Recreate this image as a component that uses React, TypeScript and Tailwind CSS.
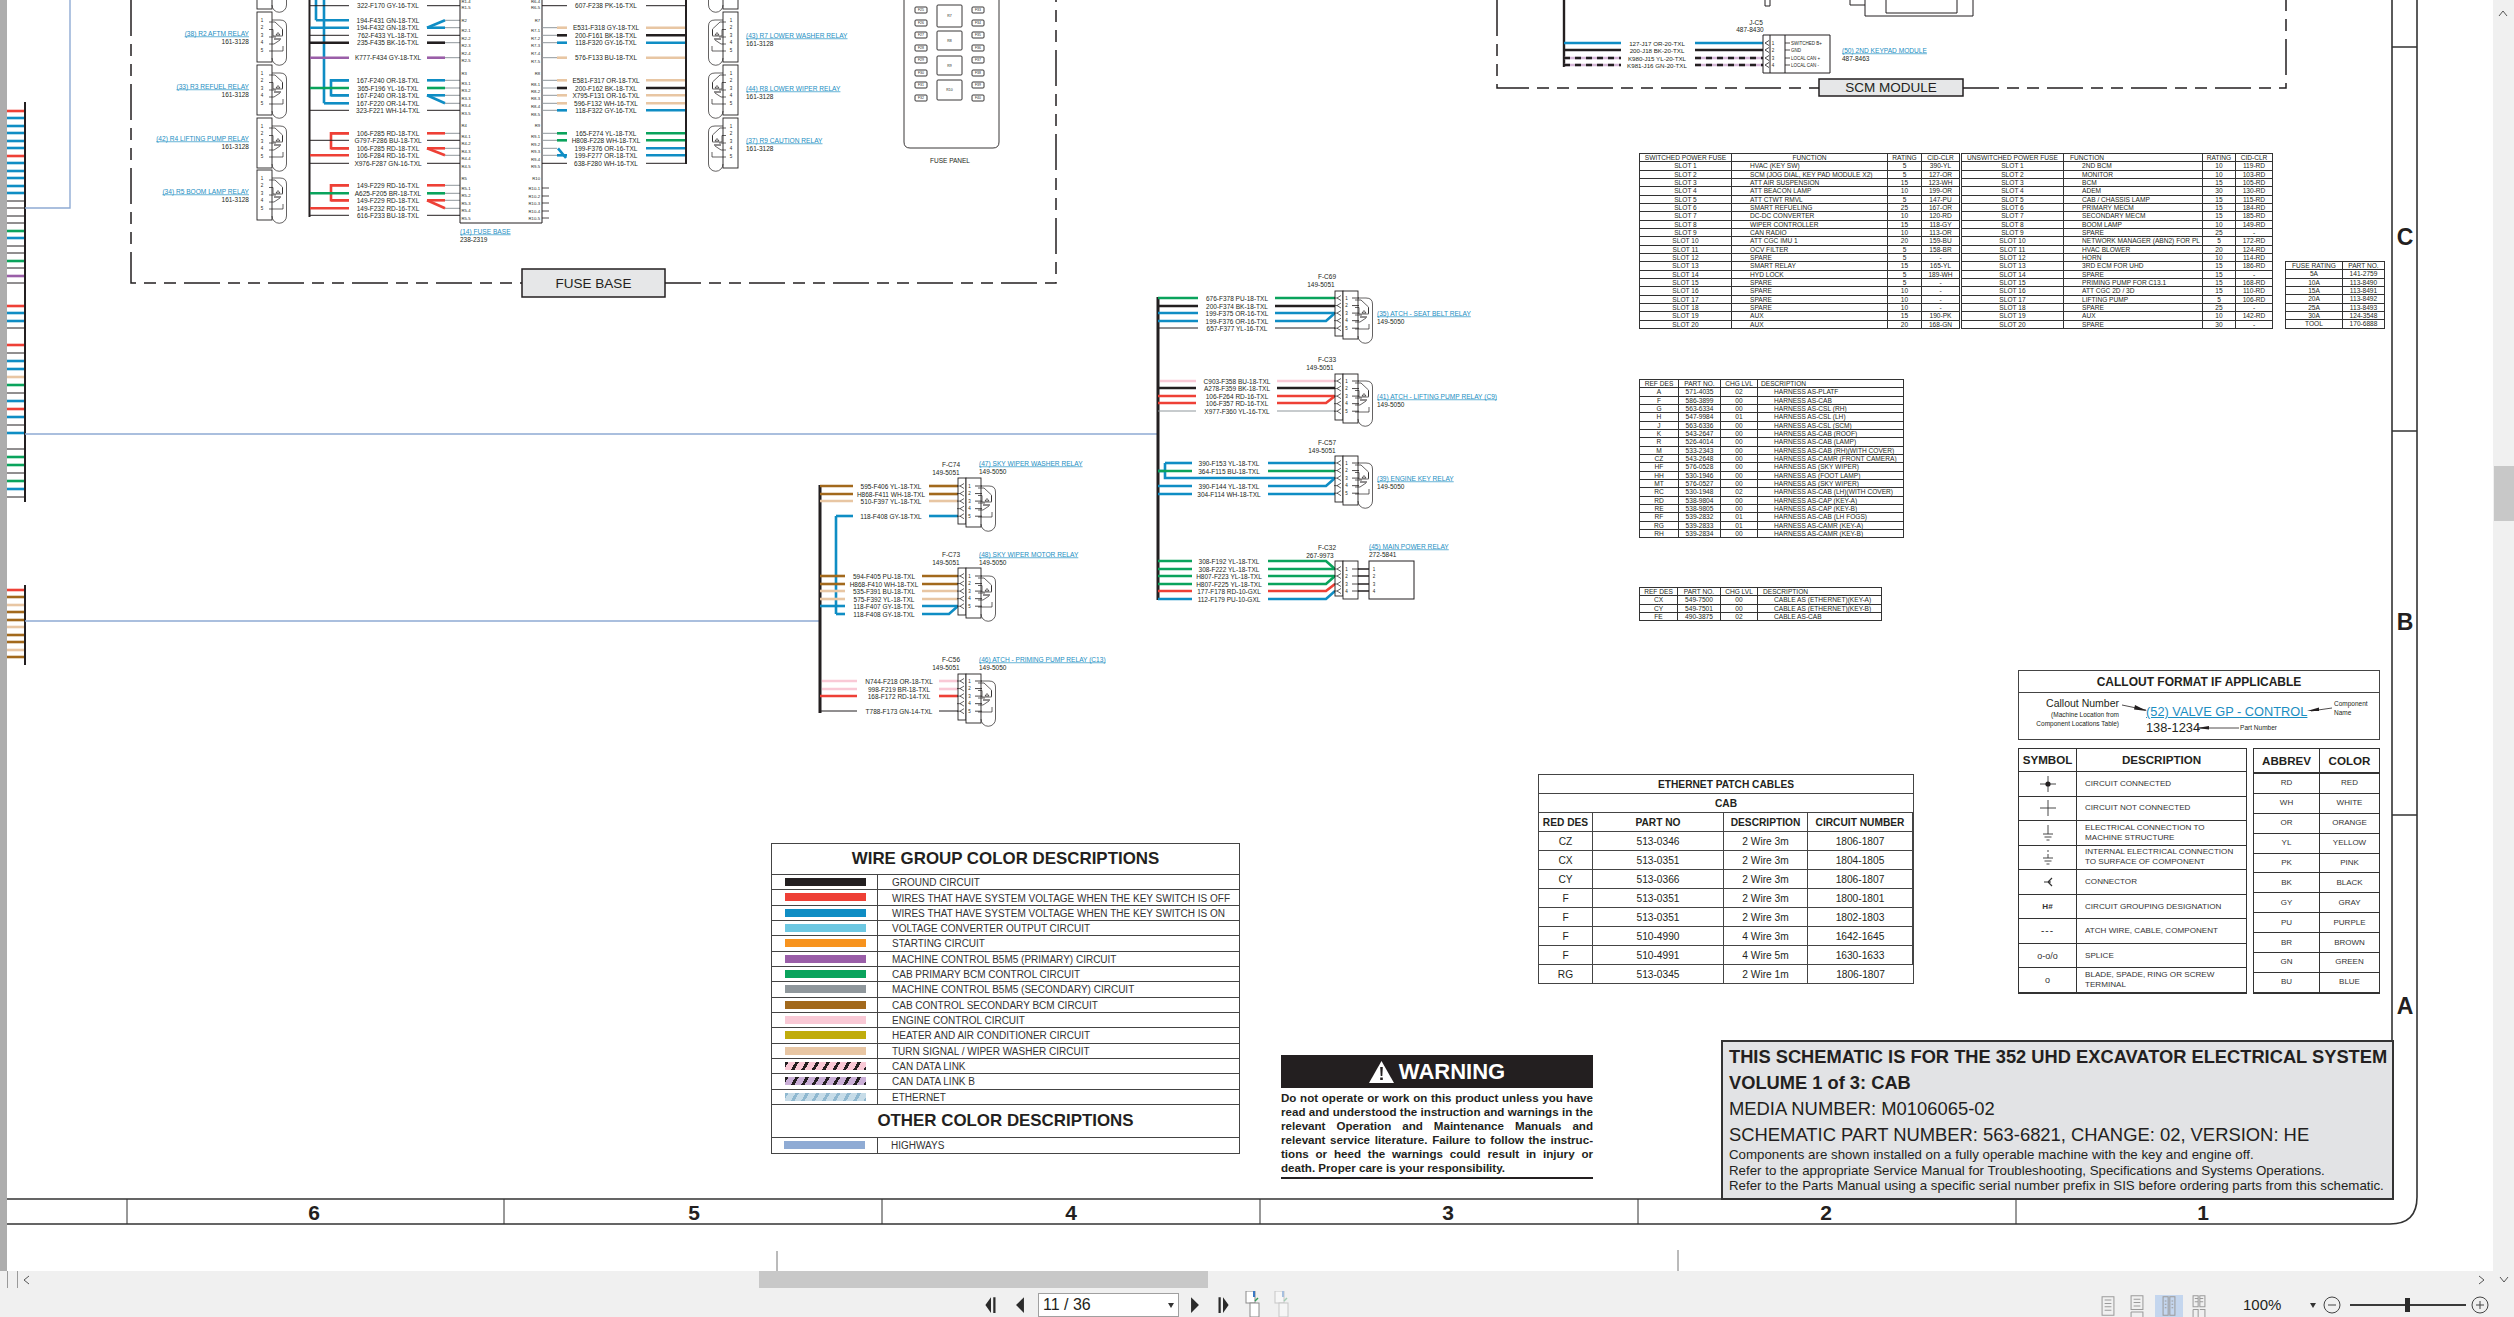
import type { ReactNode } from "react";

// ─── Wire colours ─────────────────────────────────────────────────────────────

const BLUE = "#0f8dc4";
const GREEN = "#0aa35c";
const RED = "#ee4036";
const BLACK = "#231f20";
const TAN = "#e8c6a3";
const PINK = "#f9c9d6";
const BROWN = "#a2691c";
const PURPLE = "#9a5ea8";
const GRAY = "#8f979c";
const HIGHWAY = "#8fabd4";

// ─── Schematic data ───────────────────────────────────────────────────────────

type Row = {
  y: number;
  label: string;
  color: string;
  thin?: boolean;
  from?: number;
  to?: number;
};

const FUSE_LEFT: Row[] = [
  { y: 5.7, label: "322-F170 GY-16-TXL", color: BLACK, thin: true },
  { y: 20.3, label: "194-F431 GN-18-TXL", color: BLUE, from: 316, to: 27.7 },
  { y: 27.7, label: "194-F432 GN-18-TXL", color: BLUE },
  { y: 35.3, label: "762-F433 YL-18-TXL", color: BLACK, thin: true },
  { y: 42.7, label: "235-F435 BK-16-TXL", color: BLACK },
  { y: 57.7, label: "K777-F434 GY-18-TXL", color: PURPLE },
  { y: 80.3, label: "167-F240 OR-18-TXL", color: BLUE, from: 331 },
  { y: 88, label: "365-F196 YL-16-TXL", color: GREEN },
  { y: 95.3, label: "167-F240 OR-18-TXL", color: BLUE, from: 331 },
  { y: 103.3, label: "167-F220 OR-14-TXL", color: BLUE, from: 324, to: 95.3 },
  { y: 110.3, label: "323-F221 WH-14-TXL", color: BLACK, thin: true },
  { y: 133.3, label: "106-F285 RD-18-TXL", color: RED, from: 331 },
  { y: 140.3, label: "G797-F286 BU-18-TXL", color: BLACK, thin: true },
  { y: 148.3, label: "106-F285 RD-18-TXL", color: RED, from: 331 },
  { y: 155.3, label: "106-F284 RD-16-TXL", color: RED, to: 148.3 },
  { y: 163.3, label: "X976-F287 GN-16-TXL", color: BLACK, thin: true },
  { y: 185.3, label: "149-F229 RD-16-TXL", color: RED, from: 331 },
  { y: 193.3, label: "A625-F205 BR-18-TXL", color: GREEN },
  { y: 200.3, label: "149-F229 RD-18-TXL", color: RED, from: 331 },
  { y: 208.3, label: "149-F232 RD-16-TXL", color: RED, to: 200.3 },
  { y: 215.3, label: "616-F233 BU-18-TXL", color: BLACK, thin: true },
];

const FUSE_RIGHT: Row[] = [
  { y: 5.7, label: "607-F238 PK-16-TXL", color: BLACK, thin: true },
  { y: 27.7, label: "E531-F318 GY-18-TXL", color: TAN },
  { y: 35.3, label: "200-F161 BK-18-TXL", color: BLACK },
  { y: 42.7, label: "118-F320 GY-16-TXL", color: BLUE },
  { y: 57.7, label: "576-F133 BU-18-TXL", color: TAN },
  { y: 80.3, label: "E581-F317 OR-18-TXL", color: TAN },
  { y: 88, label: "200-F162 BK-18-TXL", color: BLACK },
  { y: 95.3, label: "X795-F131 OR-16-TXL", color: TAN },
  { y: 103.3, label: "596-F132 WH-16-TXL", color: TAN },
  { y: 110.3, label: "118-F322 GY-16-TXL", color: BLUE },
  { y: 133.3, label: "165-F274 YL-18-TXL", color: GREEN },
  { y: 140.3, label: "H808-F228 WH-18-TXL", color: GREEN },
  { y: 148.3, label: "199-F376 OR-16-TXL", color: BLUE },
  { y: 155.3, label: "199-F277 OR-18-TXL", color: BLUE },
  { y: 163.3, label: "638-F280 WH-16-TXL", color: BLACK, thin: true },
];

const PINS_LEFT: [string, number][] = [
  ["R1-4", 1], ["R1-5", 7], ["R2", 20], ["R2-1", 30], ["R2-2", 38], ["R2-3", 45], ["R2-4", 53], ["R2-5", 60],
  ["R3", 73], ["R3-1", 83], ["R3-2", 90], ["R3-3", 98], ["R3-4", 105], ["R3-5", 113],
  ["R4", 125], ["R4-1", 136], ["R4-2", 143], ["R4-3", 151], ["R4-4", 158], ["R4-5", 166],
  ["R5", 178], ["R5-1", 188], ["R5-2", 195], ["R5-3", 203], ["R5-4", 210], ["R5-5", 218],
];

const PINS_RIGHT: [string, number][] = [
  ["R6-4", 1], ["R6-5", 7], ["R7", 20], ["R7-1", 30], ["R7-2", 38], ["R7-3", 45], ["R7-4", 53], ["R7-5", 61],
  ["R8", 73], ["R8-1", 84], ["R8-2", 91], ["R8-3", 98], ["R8-4", 106], ["R8-5", 114],
  ["R9", 125], ["R9-1", 136], ["R9-2", 144], ["R9-3", 151], ["R9-4", 159], ["R9-5", 166],
  ["R10", 178], ["R10-1", 188], ["R10-2", 196], ["R10-3", 203], ["R10-4", 211], ["R10-5", 218],
];

type Group = {
  name: string;
  part: string;
  nameX: number;
  partX: number;
  nameY: number;
  x2: number;
  lx: number;
  x3: number;
  conn: number;
  top: number;
  height: number;
  relayY?: number;
  busX: number;
  rows: Row[];
  callout: string;
  calloutPart: string;
  calloutX: number;
  calloutY: number;
};

const GROUPS: Group[] = [
  {
    name: "F-C69", part: "149-5051", nameX: 1327, partX: 1321, nameY: 276,
    x2: 1198, lx: 1237, x3: 1275, conn: 1335, top: 291, height: 48, relayY: 298, busX: 1158,
    callout: "(35) ATCH - SEAT BELT RELAY", calloutPart: "149-5050", calloutX: 1377, calloutY: 313,
    rows: [
      { y: 298, label: "676-F378 PU-18-TXL", color: GREEN },
      { y: 306, label: "200-F374 BK-18-TXL", color: BLACK },
      { y: 313, label: "199-F375 OR-16-TXL", color: BLUE },
      { y: 321, label: "199-F376 OR-16-TXL", color: BLUE, to: 313 },
      { y: 328, label: "657-F377 YL-16-TXL", color: BLACK, thin: true },
    ],
  },
  {
    name: "F-C33", part: "149-5051", nameX: 1327, partX: 1320, nameY: 359,
    x2: 1196, lx: 1237, x3: 1277, conn: 1335, top: 374, height: 49, relayY: 381, busX: 1158,
    callout: "(41) ATCH - LIFTING PUMP RELAY (C9)", calloutPart: "149-5050", calloutX: 1377, calloutY: 396,
    rows: [
      { y: 381, label: "C903-F358 BU-18-TXL", color: PINK, from: 1160 },
      { y: 388, label: "A278-F359 BK-18-TXL", color: BLACK },
      { y: 396, label: "106-F264 RD-16-TXL", color: RED },
      { y: 403, label: "106-F357 RD-16-TXL", color: RED, to: 396 },
      { y: 411, label: "X977-F360 YL-16-TXL", color: GRAY, thin: true },
    ],
  },
  {
    name: "F-C57", part: "149-5051", nameX: 1327, partX: 1322, nameY: 442,
    x2: 1192, lx: 1229, x3: 1268, conn: 1335, top: 456, height: 49, relayY: 463, busX: 1158,
    callout: "(39) ENGINE KEY RELAY", calloutPart: "149-5050", calloutX: 1377, calloutY: 478,
    rows: [
      { y: 463, label: "390-F153 YL-18-TXL", color: BLUE, from: 1165 },
      { y: 471, label: "364-F115 BU-18-TXL", color: GREEN },
      { y: 486, label: "390-F144 YL-18-TXL", color: BLUE, to: 478 },
      { y: 494, label: "304-F114 WH-18-TXL", color: BLUE },
    ],
  },
  {
    name: "F-C74", part: "149-5051", nameX: 951, partX: 946, nameY: 464,
    x2: 853, lx: 891, x3: 929, conn: 958, top: 478, height: 49, relayY: 486, busX: 820,
    callout: "(47) SKY WIPER WASHER RELAY", calloutPart: "149-5050", calloutX: 979, calloutY: 463,
    rows: [
      { y: 486, label: "595-F406 YL-18-TXL", color: BROWN },
      { y: 494, label: "H868-F411 WH-18-TXL", color: BROWN },
      { y: 501, label: "510-F397 YL-18-TXL", color: TAN },
      { y: 516, label: "118-F408 GY-18-TXL", color: BLUE, from: 836 },
    ],
  },
  {
    name: "F-C73", part: "149-5051", nameX: 951, partX: 946, nameY: 554,
    x2: 845, lx: 884, x3: 922, conn: 958, top: 568, height: 50, relayY: 576, busX: 820,
    callout: "(48) SKY WIPER MOTOR RELAY", calloutPart: "149-5050", calloutX: 979, calloutY: 554,
    rows: [
      { y: 576, label: "594-F405 PU-18-TXL", color: BROWN },
      { y: 584, label: "H868-F410 WH-18-TXL", color: BROWN },
      { y: 591, label: "535-F391 BU-18-TXL", color: TAN },
      { y: 599, label: "575-F392 YL-18-TXL", color: TAN },
      { y: 606, label: "118-F407 GY-18-TXL", color: BLUE },
      { y: 614, label: "118-F408 GY-18-TXL", color: BLUE, from: 836, to: 606 },
    ],
  },
  {
    name: "F-C56", part: "149-5051", nameX: 951, partX: 946, nameY: 659,
    x2: 857, lx: 899, x3: 939, conn: 958, top: 674, height: 49, relayY: 681, busX: 820,
    callout: "(46) ATCH - PRIMING PUMP RELAY (C13)", calloutPart: "149-5050", calloutX: 979, calloutY: 659,
    rows: [
      { y: 681, label: "N744-F218 OR-18-TXL", color: PINK, from: 822 },
      { y: 689, label: "998-F219 BR-18-TXL", color: PINK, from: 822 },
      { y: 696, label: "168-F172 RD-14-TXL", color: RED },
      { y: 711, label: "T788-F173 GN-14-TXL", color: BLACK, thin: true },
    ],
  },
  {
    name: "F-C32", part: "267-9973", nameX: 1327, partX: 1320, nameY: 547,
    x2: 1192, lx: 1229, x3: 1268, conn: 1335, top: 561, height: 38, busX: 1158,
    callout: "(45) MAIN POWER RELAY", calloutPart: "272-5841", calloutX: 1369, calloutY: 546,
    rows: [
      { y: 561, label: "308-F192 YL-18-TXL", color: GREEN, to: 569 },
      { y: 569, label: "308-F222 YL-18-TXL", color: GREEN },
      { y: 576, label: "H807-F223 YL-18-TXL", color: GREEN },
      { y: 584, label: "H807-F225 YL-18-TXL", color: GREEN, to: 576 },
      { y: 591, label: "177-F178 RD-10-GXL", color: RED, to: 584 },
      { y: 599, label: "112-F179 PU-10-GXL", color: BLUE, to: 591 },
    ],
  },
];

const KEYPAD = [
  { y: 43, label: "127-J17 OR-20-TXL", pin: "SWITCHED B+", color: BLUE, dashed: false },
  { y: 50, label: "200-J18 BK-20-TXL", pin: "GND", color: BLACK, dashed: false },
  { y: 58, label: "K980-J15 YL-20-TXL", pin: "LOCAL CAN +", color: BLACK, dashed: true },
  { y: 65, label: "K981-J16 GN-20-TXL", pin: "LOCAL CAN -", color: BLACK, dashed: true },
];

const STRIPES: [number, string][] = [
  [111, RED], [118, BLUE], [126, BLUE], [133, BLUE], [141, BLUE], [148, BLUE], [156, RED], [163, BLUE], [171, BLUE],
  [178, BLUE], [186, BLUE], [193, BLUE], [201, BLACK], [208, BLACK], [216, BLACK], [223, BLACK], [231, GREEN],
  [238, BLUE], [246, BLACK], [253, BLACK], [261, GREEN], [268, BLACK], [276, PURPLE], [283, BLACK],
  [306, RED], [313, BLUE], [321, BLUE], [328, BLACK], [345, RED], [353, BLACK], [361, BLUE], [369, BLUE], [377, TAN],
  [385, GREEN], [393, BLACK], [401, BLUE], [409, RED], [417, BLUE], [425, BLACK], [433, BLUE], [449, BLACK],
  [457, GREEN], [465, GREEN], [473, BLACK], [481, GREEN], [489, BLUE], [497, BLACK],
  [590, RED], [597, BROWN], [605, TAN], [612, BROWN], [620, BROWN], [627, TAN], [635, BROWN], [642, BROWN], [650, TAN], [657, BROWN],
];

// ─── Table data ───────────────────────────────────────────────────────────────

const SWITCHED = [
  ["SLOT 1", "HVAC (KEY SW)", "5", "390-YL"],
  ["SLOT 2", "SCM (JOG DIAL, KEY PAD MODULE X2)", "5", "127-OR"],
  ["SLOT 3", "ATT AIR SUSPENSION", "15", "123-WH"],
  ["SLOT 4", "ATT BEACON LAMP", "10", "199-OR"],
  ["SLOT 5", "ATT CTWT RMVL", "5", "147-PU"],
  ["SLOT 6", "SMART REFUELING", "25", "167-OR"],
  ["SLOT 7", "DC-DC CONVERTER", "10", "120-RD"],
  ["SLOT 8", "WIPER CONTROLLER", "15", "118-GY"],
  ["SLOT 9", "CAN RADIO", "10", "113-OR"],
  ["SLOT 10", "ATT CGC IMU 1", "20", "159-BU"],
  ["SLOT 11", "OCV FILTER", "5", "158-BR"],
  ["SLOT 12", "SPARE", "5", "-"],
  ["SLOT 13", "SMART RELAY", "15", "165-YL"],
  ["SLOT 14", "HYD LOCK", "5", "189-WH"],
  ["SLOT 15", "SPARE", "5", "-"],
  ["SLOT 16", "SPARE", "10", "-"],
  ["SLOT 17", "SPARE", "10", "-"],
  ["SLOT 18", "SPARE", "10", "-"],
  ["SLOT 19", "AUX", "15", "190-PK"],
  ["SLOT 20", "AUX", "20", "168-GN"],
];

const UNSWITCHED = [
  ["SLOT 1", "2ND BCM", "10", "119-RD"],
  ["SLOT 2", "MONITOR", "10", "103-RD"],
  ["SLOT 3", "BCM", "15", "105-RD"],
  ["SLOT 4", "ADEM", "30", "130-RD"],
  ["SLOT 5", "CAB / CHASSIS LAMP", "15", "115-RD"],
  ["SLOT 6", "PRIMARY MECM", "15", "184-RD"],
  ["SLOT 7", "SECONDARY MECM", "15", "185-RD"],
  ["SLOT 8", "BOOM LAMP", "10", "149-RD"],
  ["SLOT 9", "SPARE", "25", "-"],
  ["SLOT 10", "NETWORK MANAGER (ABN2) FOR PL", "5", "172-RD"],
  ["SLOT 11", "HVAC BLOWER", "20", "124-RD"],
  ["SLOT 12", "HORN", "10", "114-RD"],
  ["SLOT 13", "3RD ECM FOR UHD", "15", "186-RD"],
  ["SLOT 14", "SPARE", "15", "-"],
  ["SLOT 15", "PRIMING PUMP FOR C13.1", "15", "168-RD"],
  ["SLOT 16", "ATT CGC 2D / 3D", "15", "110-RD"],
  ["SLOT 17", "LIFTING PUMP", "5", "106-RD"],
  ["SLOT 18", "SPARE", "25", "-"],
  ["SLOT 19", "AUX", "10", "142-RD"],
  ["SLOT 20", "SPARE", "30", "-"],
];

const FUSE_RATINGS = [
  ["5A", "141-2759"],
  ["10A", "113-8490"],
  ["15A", "113-8491"],
  ["20A", "113-8492"],
  ["25A", "113-8493"],
  ["30A", "124-3548"],
  ["TOOL", "170-6888"],
];

const HARNESSES = [
  ["A", "571-4035", "02", "HARNESS AS-PLATF"],
  ["F", "586-3899", "00", "HARNESS AS-CAB"],
  ["G", "563-6334", "00", "HARNESS AS-CSL (RH)"],
  ["H", "547-9984", "01", "HARNESS AS-CSL (LH)"],
  ["J", "563-6336", "00", "HARNESS AS-CSL (SCM)"],
  ["K", "543-2647", "00", "HARNESS AS-CAB (ROOF)"],
  ["R", "526-4014", "00", "HARNESS AS-CAB (LAMP)"],
  ["M", "533-2343", "00", "HARNESS AS-CAB (RH)(WITH COVER)"],
  ["CZ", "543-2648", "00", "HARNESS AS-CAMR (FRONT CAMERA)"],
  ["HF", "576-0528", "00", "HARNESS AS (SKY WIPER)"],
  ["HH", "530-1946", "00", "HARNESS AS (FOOT LAMP)"],
  ["MT", "576-0527", "00", "HARNESS AS (SKY WIPER)"],
  ["RC", "530-1948", "02", "HARNESS AS-CAB (LH)(WITH COVER)"],
  ["RD", "538-9804", "00", "HARNESS AS-CAP (KEY-A)"],
  ["RE", "538-9805", "00", "HARNESS AS-CAP (KEY-B)"],
  ["RF", "539-2832", "01", "HARNESS AS-CAB (LH FOGS)"],
  ["RG", "539-2833", "01", "HARNESS AS-CAMR (KEY-A)"],
  ["RH", "539-2834", "00", "HARNESS AS-CAMR (KEY-B)"],
];

const CABLES = [
  ["CX", "549-7500", "00", "CABLE AS (ETHERNET)(KEY-A)"],
  ["CY", "549-7501", "00", "CABLE AS (ETHERNET)(KEY-B)"],
  ["FE", "490-3875", "02", "CABLE AS-CAB"],
];

const PATCH_CABLES = [
  ["CZ", "513-0346", "2 Wire 3m", "1806-1807"],
  ["CX", "513-0351", "2 Wire 3m", "1804-1805"],
  ["CY", "513-0366", "2 Wire 3m", "1806-1807"],
  ["F", "513-0351", "2 Wire 3m", "1800-1801"],
  ["F", "513-0351", "2 Wire 3m", "1802-1803"],
  ["F", "510-4990", "4 Wire 3m", "1642-1645"],
  ["F", "510-4991", "4 Wire 5m", "1630-1633"],
  ["RG", "513-0345", "2 Wire 1m", "1806-1807"],
];

const LEGEND = [
  { swatch: "bg-[#231f20]", text: "GROUND CIRCUIT" },
  { swatch: "bg-[#ee4036]", text: "WIRES THAT HAVE SYSTEM VOLTAGE WHEN THE KEY SWITCH IS OFF" },
  { swatch: "bg-[#0f8dc4]", text: "WIRES THAT HAVE SYSTEM VOLTAGE WHEN THE KEY SWITCH IS ON" },
  { swatch: "bg-[#6dc8e2]", text: "VOLTAGE CONVERTER OUTPUT CIRCUIT" },
  { swatch: "bg-[#f7931e]", text: "STARTING CIRCUIT" },
  { swatch: "bg-[#9a5ea8]", text: "MACHINE CONTROL B5M5 (PRIMARY) CIRCUIT" },
  { swatch: "bg-[#0aa35c]", text: "CAB PRIMARY BCM CONTROL CIRCUIT" },
  { swatch: "bg-[#8f979c]", text: "MACHINE CONTROL B5M5 (SECONDARY) CIRCUIT" },
  { swatch: "bg-[#a2691c]", text: "CAB CONTROL SECONDARY BCM CIRCUIT" },
  { swatch: "bg-[#f9c9d6]", text: "ENGINE CONTROL CIRCUIT" },
  { swatch: "bg-[#c0ac0c]", text: "HEATER AND AIR CONDITIONER CIRCUIT" },
  { swatch: "bg-[#e8c6a3]", text: "TURN SIGNAL / WIPER WASHER CIRCUIT" },
  { swatch: "bg-[repeating-linear-gradient(120deg,#231f20_0_3px,#f9c9d6_3px_9px)]", text: "CAN DATA LINK" },
  { swatch: "bg-[repeating-linear-gradient(120deg,#231f20_0_3px,#c9aed6_3px_9px)]", text: "CAN DATA LINK B" },
  { swatch: "bg-[repeating-linear-gradient(120deg,#8fb8d0_0_3px,#c7dce8_3px_9px)]", text: "ETHERNET" },
];

const ABBREVS = [
  ["RD", "RED"], ["WH", "WHITE"], ["OR", "ORANGE"], ["YL", "YELLOW"], ["PK", "PINK"],
  ["BK", "BLACK"], ["GY", "GRAY"], ["PU", "PURPLE"], ["BR", "BROWN"], ["GN", "GREEN"], ["BU", "BLUE"],
];

// ─── Schematic pieces ─────────────────────────────────────────────────────────

function Wire({ d, color, thin }: { d: string; color: string; thin?: boolean }) {
  return <path d={d} stroke={color} strokeWidth={thin ? 1 : 2.6} fill="none" />;
}

function Label({ x, y, children, anchor = "middle", size = "text-[6.5px]" }: {
  x: number;
  y: number;
  children: ReactNode;
  anchor?: "start" | "middle" | "end";
  size?: string;
}) {
  return (
    <text x={x} y={y} textAnchor={anchor} dominantBaseline="central" className={`${size} fill-[#231f20]`}>
      {children}
    </text>
  );
}

function Callout({ x, y, name, part, anchor = "start" }: {
  x: number;
  y: number;
  name: string;
  part: string;
  anchor?: "start" | "end";
}) {
  return (
    <>
      <text x={x} y={y} textAnchor={anchor} dominantBaseline="central" className="text-[6.6px] fill-[#1b8ec2] underline">
        {name}
      </text>
      <Label x={x} y={y + 8} anchor={anchor}>{part}</Label>
    </>
  );
}

// relay body with the coil and contact drawn inside, dir -1 mirrors it
function RelayCap({ x, y, dir = 1, h = 45 }: { x: number; y: number; dir?: number; h?: number }) {
  return (
    <g transform={`translate(${x} ${y}) scale(${dir} 1)`} fill="none" stroke="#231f20" strokeWidth={0.7}>
      <path d={`M0 0H8Q14.5 0 14.5 6V${h - 7}A7.25 7.25 0 0 1 0 ${h - 7}`} />
      <path d="M-3 2H3L10.5 9V15M-3 9.5H1V16H10.5V10M-3 17H4M-3 24H2L8 20M-3 31H11V26M6 12.5L8 15H4Z" />
      <path d="M2 19H9" strokeWidth={1} />
    </g>
  );
}

function RelayBlock({ x, y, capX, dir, numX, cut }: {
  x: number;
  y: number;
  capX: number;
  dir: number;
  numX: number;
  cut?: boolean;
}) {
  return (
    <>
      <rect x={x} y={y} width={15} height={50} fill="#ffffff" stroke="#231f20" strokeWidth={0.9} />
      <RelayCap x={capX} y={y + 8} dir={dir} />
      {!cut && [1, 2, 3, 4, 5].map((n) => (
        <Label key={n} x={numX} y={y + 8 + (n - 1) * 7.6} size="text-[4.5px]">{n}</Label>
      ))}
    </>
  );
}

function ConnectorGroup({ g }: { g: Group }) {
  const pinYs = g.relayY ? [0, 1, 2, 3, 4].map((i) => g.relayY! + i * 7.55) : [569, 576, 584, 591];

  return (
    <g>
      <Label x={g.nameX} y={g.nameY}>{g.name}</Label>
      <Label x={g.partX} y={g.nameY + 8}>{g.part}</Label>
      {g.rows.map((r) => (
        <g key={r.label + r.y}>
          <Wire d={`M${r.from ?? g.busX} ${r.y}H${g.x2}`} color={r.color} thin={r.thin} />
          <Label x={g.lx} y={r.y}>{r.label}</Label>
          <Wire
            d={r.to === undefined ? `M${g.x3} ${r.y}H${g.conn}` : `M${g.x3} ${r.y}H${g.conn - 9}L${g.conn} ${r.to}`}
            color={r.color}
            thin={r.thin}
          />
        </g>
      ))}
      <rect x={g.conn} y={g.top} width={8} height={g.height - 3} fill="#ffffff" stroke="#231f20" strokeWidth={0.9} />
      <rect x={g.conn + 8} y={g.top} width={15} height={g.height} fill="#ffffff" stroke="#231f20" strokeWidth={0.9} />
      {pinYs.map((y, i) => (
        <g key={y}>
          <path d={`M${g.conn + 6} ${y - 2.5}L${g.conn + 2} ${y}L${g.conn + 6} ${y + 2.5}M${g.conn - 1} ${y}H${g.conn + 2}`} stroke="#231f20" strokeWidth={0.7} fill="none" />
          <Label x={g.conn + 11.5} y={y} size="text-[4.5px]">{i + 1}</Label>
          <path d={`M${g.conn + 17} ${y}H${g.conn + 24}`} stroke="#231f20" strokeWidth={0.8} />
        </g>
      ))}
      {g.relayY && <RelayCap x={g.conn + 23} y={g.relayY} />}
      <Callout x={g.calloutX} y={g.calloutY} name={g.callout} part={g.calloutPart} />
    </g>
  );
}

function FusePanel() {
  const smallY = [10, 23, 35, 48, 60, 73, 85, 98];
  const left = ["F25", "F26", "F27", "F28", "F29", "F30", "F31", "F32"];
  const right = ["F33", "F34", "F35", "F36", "F37", "F38", "F39", "F40"];
  const bigs = [["R7", 5, 22], ["R8", 31, 19], ["R9", 56, 19], ["R10", 80, 20]] as const;
  return (
    <g fill="none" stroke="#231f20" strokeWidth={0.9}>
      <path d="M904 0V142Q904 148 910 148H993Q999 148 999 142V0" />
      {smallY.map((y, i) => (
        <g key={y}>
          <rect x={915} y={y - 3} width={12} height={6} rx={1} />
          <rect x={972} y={y - 3} width={12} height={6} rx={1} />
          <text x={921} y={y} textAnchor="middle" dominantBaseline="central" stroke="none" className="text-[3.5px] fill-[#231f20]">{left[i]}</text>
          <text x={978} y={y} textAnchor="middle" dominantBaseline="central" stroke="none" className="text-[3.5px] fill-[#231f20]">{right[i]}</text>
        </g>
      ))}
      {bigs.map(([name, y, h]) => (
        <g key={name}>
          <rect x={937} y={y} width={25} height={h} rx={1} />
          <text x={949.5} y={y + h / 2} textAnchor="middle" dominantBaseline="central" stroke="none" className="text-[3.5px] fill-[#231f20]">{name}</text>
        </g>
      ))}
    </g>
  );
}

function Schematic() {
  return (
    <svg
      className="absolute left-0 top-0 font-['Liberation_Sans',Arial,sans-serif]"
      width={2486}
      height={1271}
      viewBox="7 0 2486 1271"
    >
      {/* harness bar on the left edge */}
      <path d="M25 102V502M25 585V665" stroke="#231f20" strokeWidth={2} />
      {STRIPES.map(([y, c]) => (
        <path key={y} d={`M7 ${y}H24`} stroke={c} strokeWidth={c === BLACK ? 1 : 2.6} />
      ))}

      {/* highways */}
      <path d="M25 208H70V0M25 434H1157M25 621H819" stroke={HIGHWAY} strokeWidth={1.4} fill="none" />

      {/* fuse base frame */}
      <path d="M131 0V283H522M665 283H1056V0" stroke="#231f20" strokeWidth={1.5} fill="none" strokeDasharray="36 8 12 8 12 8" />
      <rect x={522} y={269} width={143} height={28} fill="#e6e7e8" stroke="#231f20" strokeWidth={1.5} />
      <Label x={593.5} y={283} size="text-[13.5px]">FUSE BASE</Label>

      {/* fuse base left bus */}
      <path d="M309.5 0V217M686 0V164" stroke="#231f20" strokeWidth={2} />
      <Wire d="M316 0V20.3M324 0V103.3M349 80.3H331V95.3H349" color={BLUE} />
      <Wire d="M349 133.3H331V148.3H349M349 185.3H331V200.3H349" color={RED} />
      {FUSE_LEFT.map((r) => (
        <g key={r.label + r.y}>
          <Wire d={`M${r.from ?? 310} ${r.y}H349`} color={r.color} thin={r.thin} />
          <Label x={388} y={r.y}>{r.label}</Label>
          <Wire
            d={r.to === undefined ? `M427 ${r.y}H${r.thin ? 460 : 445}` : `M427 ${r.to + 0}L445 ${r.y}`}
            color={r.color}
            thin={r.thin}
          />
          {!r.thin && <Wire d={`M445 ${r.y}H460`} color={GRAY} thin />}
        </g>
      ))}

      {/* fuse block */}
      <path d="M460 0V223H542V0" fill="#ffffff" stroke="#231f20" strokeWidth={1} />
      {PINS_LEFT.map(([name, y]) => (
        <Label key={name} x={461.5} y={y} anchor="start" size="text-[4.2px]">{name}</Label>
      ))}
      {PINS_RIGHT.map(([name, y]) => (
        <Label key={name} x={540} y={y} anchor="end" size="text-[4.2px]">{name}</Label>
      ))}
      <path d="M542 188H549M542 196H549M542 203H549M542 211H549M542 218H549" stroke="#231f20" strokeWidth={0.8} />
      <Callout x={460} y={231} name="(14) FUSE BASE" part="238-2319" />

      {/* fuse base right bus */}
      {FUSE_RIGHT.map((r) => (
        <g key={r.label + r.y}>
          <Wire d={`M542 ${r.y}H${r.thin ? 567 : 557}`} color={r.thin ? r.color : GRAY} thin />
          {!r.thin && <Wire d={r.y === 148.3 ? `M558 148.3L566 158` : `M557 ${r.y}H567`} color={r.color} />}
          <Label x={606} y={r.y}>{r.label}</Label>
          <Wire d={`M646 ${r.y}H685`} color={r.color} thin={r.thin} />
        </g>
      ))}

      {/* relays beside the fuse block */}
      <RelayBlock x={257} y={-41} capX={272} dir={1} numX={262} cut />
      <RelayBlock x={257} y={12} capX={272} dir={1} numX={262} />
      <RelayBlock x={257} y={65} capX={272} dir={1} numX={262} />
      <RelayBlock x={257} y={118} capX={272} dir={1} numX={262} />
      <RelayBlock x={257} y={170} capX={272} dir={1} numX={262} />
      <RelayBlock x={723} y={-41} capX={723} dir={-1} numX={731} cut />
      <RelayBlock x={723} y={12} capX={723} dir={-1} numX={731} />
      <RelayBlock x={723} y={65} capX={723} dir={-1} numX={731} />
      <RelayBlock x={723} y={118} capX={723} dir={-1} numX={731} />
      <Callout x={249} y={33} name="(38) R2 AFTM RELAY" part="161-3128" anchor="end" />
      <Callout x={249} y={86} name="(33) R3 REFUEL RELAY" part="161-3128" anchor="end" />
      <Callout x={249} y={138} name="(42) R4 LIFTING PUMP RELAY" part="161-3128" anchor="end" />
      <Callout x={249} y={191} name="(34) R5 BOOM LAMP RELAY" part="161-3128" anchor="end" />
      <Callout x={746} y={35} name="(43) R7 LOWER WASHER RELAY" part="161-3128" />
      <Callout x={746} y={88} name="(44) R8 LOWER WIPER RELAY" part="161-3128" />
      <Callout x={746} y={140} name="(37) R9 CAUTION RELAY" part="161-3128" />

      <FusePanel />
      <Label x={950} y={160}>FUSE PANEL</Label>

      {/* attachment relay groups */}
      <path d="M1158 297V600M820 485V713" stroke="#231f20" strokeWidth={3} />
      <Wire d="M1165 463V478H1335M1158 471H1165" color={BLUE} />
      <Wire d="M836 516V614" color={BLUE} />
      {GROUPS.map((g) => (
        <ConnectorGroup key={g.name} g={g} />
      ))}
      <rect x={1369} y={561} width={45} height={38} fill="#ffffff" stroke="#231f20" strokeWidth={1} />
      <path d="M1358 569H1369M1358 576H1369M1358 584H1369M1358 591H1369" stroke="#231f20" strokeWidth={1.6} />
      {[569, 576, 584, 591].map((y, i) => (
        <Label key={y} x={1374} y={y} size="text-[4.5px]">{i + 1}</Label>
      ))}

      {/* scm module */}
      <path d="M1497 0V88H1819M1963 88H2286V0" stroke="#231f20" strokeWidth={1.5} fill="none" strokeDasharray="36 8 12 8 12 8" />
      <path d="M1564 0V67" stroke="#231f20" strokeWidth={2.4} />
      {KEYPAD.map((k, i) => (
        <g key={k.y}>
          {k.dashed && <path d={`M1564 ${k.y}H1621M1695 ${k.y}H1763`} stroke="#d6b8d8" strokeWidth={2.6} />}
          <path
            d={`M1564 ${k.y}H1621M1695 ${k.y}H1763`}
            stroke={k.color}
            strokeWidth={2.6}
            strokeDasharray={k.dashed ? "6 5" : undefined}
          />
          <Label x={1657} y={k.y} size="text-[6.2px]">{k.label}</Label>
          <path d={`M1769 ${k.y - 2.5}L1765 ${k.y}L1769 ${k.y + 2.5}`} stroke="#231f20" strokeWidth={0.8} fill="none" />
          <Label x={1773} y={k.y} size="text-[4.5px]">{i + 1}</Label>
          <path d={`M1785 ${k.y}H1790`} stroke="#231f20" strokeWidth={0.8} />
          <Label x={1791} y={k.y} anchor="start" size="text-[4.5px]">{k.pin}</Label>
        </g>
      ))}
      <path d="M1763 35H1830V73H1763ZM1770 35V73M1785 35V73" stroke="#231f20" strokeWidth={1} fill="none" />
      <Label x={1756} y={22}>J-C5</Label>
      <Label x={1750} y={29}>487-8430</Label>
      <Callout x={1842} y={50} name="(50) 2ND KEYPAD MODULE" part="487-8463" />
      <path d="M1765 0V6H1770V0M1850 0V5H1865M1865 0V16H1973V0M1886 0V13H1957V0" stroke="#231f20" strokeWidth={1} fill="none" />
      <rect x={1819} y={79} width={144} height={17} fill="#e6e7e8" stroke="#231f20" strokeWidth={1.5} />
      <Label x={1891} y={87} size="text-[13.5px]">SCM MODULE</Label>

      {/* sheet frame */}
      <path d="M7 1199H2392M7 1224H2390Q2417 1224 2417 1197V0M2392 0V1199" stroke="#333333" strokeWidth={1.6} fill="none" />
      <path d="M2392 47H2417M2392 431H2417M2392 815H2417" stroke="#333333" strokeWidth={1.6} />
      <path d="M127 1199V1224M504 1199V1224M882 1199V1224M1260 1199V1224M1638 1199V1224M2016 1199V1224" stroke="#333333" strokeWidth={1} />
      {[[314, "6"], [694, "5"], [1071, "4"], [1448, "3"], [1826, "2"], [2203, "1"]].map(([x, n]) => (
        <text key={n} x={x} y={1212} textAnchor="middle" dominantBaseline="central" className="text-[21px] font-bold fill-[#231f20]">{n}</text>
      ))}
      {[[237, "C"], [622, "B"], [1006, "A"]].map(([y, n]) => (
        <text key={n} x={2405} y={y} textAnchor="middle" dominantBaseline="central" className="text-[23px] font-bold fill-[#231f20]">{n}</text>
      ))}

      {/* page break ticks */}
      <path d="M777 1251V1271M1678 1250V1271" stroke="#777777" strokeWidth={1} />
    </svg>
  );
}

// ─── Tables ───────────────────────────────────────────────────────────────────

function TinyTable({ place, cols, head, rows, aligns, headAligns }: {
  place: string;
  cols: string;
  head: string[];
  rows: string[][];
  aligns: string[];
  headAligns?: string[];
}) {
  const cell = "border-r border-b border-[#333333] whitespace-nowrap overflow-hidden leading-[8px]";
  return (
    <div className={`absolute ${place} ${cols} grid auto-rows-[8.33px] border-t border-l border-[#333333] bg-white text-[6.6px] text-[#231f20]`}>
      {head.map((h, i) => (
        <div key={h} className={`${cell} ${(headAligns ?? aligns)[i]}`}>{h}</div>
      ))}
      {rows.map((row, r) =>
        row.map((v, i) => (
          <div key={`${r}-${i}`} className={`${cell} ${aligns[i]}`}>{v}</div>
        )),
      )}
    </div>
  );
}

function PatchTable() {
  const cell = "flex items-center justify-center border-r border-b border-[#444444] last:border-r-0 pt-[1px]";
  return (
    <div className="absolute left-[1531px] top-[774px] w-[376px] border-t border-l border-r border-[#444444] text-[10.2px] text-[#231f20]">
      <div className="flex h-[19px] items-center justify-center border-b border-[#444444] pt-[1px] font-bold">ETHERNET PATCH CABLES</div>
      <div className="flex h-[19px] items-center justify-center border-b border-[#444444] pt-[1px] font-bold">CAB</div>
      <div className="grid grid-cols-[54px_131px_84px_105px] auto-rows-[19px]">
        {["RED DES", "PART NO", "DESCRIPTION", "CIRCUIT NUMBER"].map((h) => (
          <div key={h} className={`${cell} font-bold`}>{h}</div>
        ))}
        {PATCH_CABLES.map((row, r) =>
          row.map((v, i) => (
            <div key={`${r}-${i}`} className={cell}>{v}</div>
          )),
        )}
      </div>
    </div>
  );
}

function WireLegend() {
  const row = "flex h-[15.33px] items-center border-b border-[#444444]";
  return (
    <div className="absolute left-[764px] top-[843px] w-[469px] border border-[#444444] text-[#333333]">
      <div className="flex h-[31px] items-center justify-center border-b border-[#444444] text-[16.9px] font-bold text-[#231f20]">
        WIRE GROUP COLOR DESCRIPTIONS
      </div>
      {LEGEND.map((item) => (
        <div key={item.text} className={row}>
          <div className="flex h-full w-[106px] items-center border-r border-[#444444] pl-[13px]">
            <div className={`h-[8px] w-[81px] ${item.swatch}`} />
          </div>
          <span className="pl-[14px] pt-[1px] text-[10px] whitespace-nowrap">{item.text}</span>
        </div>
      ))}
      <div className="flex h-[33px] items-center justify-center border-b border-[#444444] text-[16.9px] font-bold text-[#231f20]">
        OTHER COLOR DESCRIPTIONS
      </div>
      <div className="flex h-[15px] items-center">
        <div className="flex h-full w-[106px] items-center border-r border-[#444444] pl-[12px]">
          <div className="h-[8px] w-[81px] bg-[#8fabd4]" />
        </div>
        <span className="pl-[13px] text-[10px]">HIGHWAYS</span>
      </div>
    </div>
  );
}

function WarningBox() {
  return (
    <div className="absolute left-[1274px] top-[1055px] w-[312px] border-b-2 border-[#231f20] pb-[2px]">
      <div className="flex h-[33px] items-center justify-center gap-[5px] bg-[#231f20] text-[22px] font-bold text-white">
        <svg width="25" height="22" viewBox="0 0 25 22">
          <path d="M12.5 0L25 22H0Z" fill="#ffffff" />
          <path d="M11.2 6H13.8L13.3 15H11.7ZM11.2 16.5H13.8V19H11.2Z" fill="#231f20" />
        </svg>
        WARNING
      </div>
      <p className="mt-[3px] text-justify text-[11.6px] font-bold leading-[14px] text-[#231f20]">
        Do not operate or work on this product unless you have read and understood the instruction and warnings in the
        relevant Operation and Maintenance Manuals and relevant service literature. Failure to follow the instruc-
        tions or heed the warnings could result in injury or death. Proper care is your responsibility.
      </p>
    </div>
  );
}

function TitleBlock() {
  return (
    <div className="absolute left-[1714px] top-[1040px] flex h-[160px] w-[673px] flex-col border-2 border-[#333333] bg-[#e2e3e5] pl-[6px] pt-[5px] text-[#231f20]">
      <div className="h-[26px] text-[18.3px] font-bold leading-[20px] whitespace-nowrap">THIS SCHEMATIC IS FOR THE 352 UHD EXCAVATOR ELECTRICAL SYSTEM</div>
      <div className="h-[26px] text-[18.3px] font-bold leading-[20px]">VOLUME 1 of 3: CAB</div>
      <div className="h-[26px] text-[18.4px] leading-[20px]">MEDIA NUMBER: M0106065-02</div>
      <div className="h-[22px] text-[18.4px] leading-[20px]">SCHEMATIC PART NUMBER: 563-6821, CHANGE: 02, VERSION: HE</div>
      <div className="text-[13.3px] leading-[15.7px]">Components are shown installed on a fully operable machine with the key and engine off.</div>
      <div className="text-[13.3px] leading-[15.7px]">Refer to the appropriate Service Manual for Troubleshooting, Specifications and Systems Operations.</div>
      <div className="text-[13.3px] leading-[15.7px] whitespace-nowrap">Refer to the Parts Manual using a specific serial number prefix in SIS before ordering parts from this schematic.</div>
    </div>
  );
}

function CalloutFormat() {
  return (
    <div className="absolute left-[2011px] top-[670px] h-[70px] w-[362px] border border-[#444444] text-[#231f20]">
      <div className="flex h-[22px] items-center justify-center border-b border-[#444444] text-[12px] font-bold">
        CALLOUT FORMAT IF APPLICABLE
      </div>
      <div className="relative flex h-[46px]">
        <div className="w-[100px] pt-[5px] text-right leading-none">
          <div className="text-[10.5px]">Callout Number</div>
          <div className="mt-[1px] text-[6.5px] leading-[9px]">(Machine Location from<br />Component Locations Table)</div>
        </div>
        <div className="ml-[27px] w-[165px]">
          <div className="mt-[11px] text-[12.8px] leading-[15px] text-[#1b8ec2] underline whitespace-nowrap">(52) VALVE GP - CONTROL</div>
          <div className="mt-[1px] flex items-center text-[12.8px] leading-[16px]">
            138-1234
            <span className="ml-[40px] text-[6.5px]">Part Number</span>
          </div>
        </div>
        <div className="ml-[23px] pt-[6px] text-[6.5px] leading-[9px]">Component<br />Name</div>
        <svg className="absolute left-0 top-0" width="362" height="46" viewBox="0 0 362 46">
          <path d="M103 12L127 17M292 18L313 15M178 35H220" stroke="#231f20" strokeWidth="0.8" fill="none" />
          <path d="M128 18L115 16.5L116 12ZM288 18L300 14.5V18ZM178 35L190 33V36.5Z" fill="#231f20" />
        </svg>
      </div>
    </div>
  );
}

function SymbolMark({ kind }: { kind: number }) {
  const paths = [
    "M-8 0H8M0 -8V8",
    "M-8 0H8M0 -8V8",
    "M0 -8V1M-5 1H5M-3.5 4H3.5M-1.5 7H1.5",
    "M0 -7V-5M0 -3V1M-5 1H5M-3.5 4H3.5M-1.5 7H1.5",
    "M-4 0H3M4 -4L0 0L4 4",
  ];
  return (
    <svg width="20" height="20" viewBox="-10 -10 20 20">
      <path d={paths[kind]} stroke="#333333" strokeWidth={kind === 4 ? 1.2 : 0.9} fill="none" />
      {kind === 0 && <circle r="2.6" fill="#231f20" />}
    </svg>
  );
}

function SymbolTable() {
  const rows: { sym: ReactNode; text: ReactNode }[] = [
    { sym: <SymbolMark kind={0} />, text: "CIRCUIT CONNECTED" },
    { sym: <SymbolMark kind={1} />, text: "CIRCUIT NOT CONNECTED" },
    { sym: <SymbolMark kind={2} />, text: <>ELECTRICAL CONNECTION TO<br />MACHINE STRUCTURE</> },
    { sym: <SymbolMark kind={3} />, text: <>INTERNAL ELECTRICAL CONNECTION<br />TO SURFACE OF COMPONENT</> },
    { sym: <SymbolMark kind={4} />, text: "CONNECTOR" },
    { sym: <span className="font-bold">H#</span>, text: "CIRCUIT GROUPING DESIGNATION" },
    { sym: <span className="text-[10px] tracking-[1px]">---</span>, text: "ATCH WIRE, CABLE, COMPONENT" },
    { sym: <span className="text-[9px]">o-o/o</span>, text: "SPLICE" },
    { sym: <span className="text-[9px]">o</span>, text: <>BLADE, SPADE, RING OR SCREW<br />TERMINAL</> },
  ];
  return (
    <div className="absolute left-[2011px] top-[748px] grid w-[229px] grid-cols-[58px_1fr] grid-rows-[23px_repeat(9,24.55px)] border border-[#333333] text-[8.1px] leading-[10px] text-[#333333]">
      <div className="flex items-center justify-center border-r border-b border-[#333333] text-[11.6px] font-bold text-[#231f20]">SYMBOL</div>
      <div className="flex items-center justify-center border-b border-[#333333] text-[11.6px] font-bold text-[#231f20]">DESCRIPTION</div>
      {rows.map((r, i) => (
        <div key={i} className="contents">
          <div className="flex items-center justify-center border-r border-b border-[#333333]">{r.sym}</div>
          <div className="flex items-center border-b border-[#333333] pl-[8px]">
            <span>{r.text}</span>
          </div>
        </div>
      ))}
    </div>
  );
}

function AbbrevTable() {
  return (
    <div className="absolute left-[2246px] top-[748px] grid w-[127px] grid-cols-[66px_1fr] grid-rows-[25px_repeat(11,19.9px)] border border-[#333333] text-[8px] text-[#333333]">
      <div className="flex items-center justify-center border-r border-b-2 border-[#333333] text-[11.6px] font-bold text-[#231f20]">ABBREV</div>
      <div className="flex items-center justify-center border-b-2 border-[#333333] text-[11.6px] font-bold text-[#231f20]">COLOR</div>
      {ABBREVS.map(([a, c]) => (
        <div key={a} className="contents">
          <div className="flex items-center justify-center border-r border-b border-[#333333]">{a}</div>
          <div className="flex items-center justify-center border-b border-[#333333]">{c}</div>
        </div>
      ))}
    </div>
  );
}

// ─── Viewer chrome ────────────────────────────────────────────────────────────

function NavArrow({ dir, double }: { dir: "left" | "right"; double?: boolean }) {
  const shape = double ? "M0 8L5 1V15ZM7 1H9V15H7Z" : "M0 8L7 1V15Z";
  return (
    <svg width={double ? 14 : 8} height="18" viewBox={double ? "0 0 10 16" : "0 0 7 16"} className={dir === "right" ? "-scale-x-100" : ""}>
      <path d={shape} fill="#2b2b2b" />
    </svg>
  );
}

function PageIcon({ dim }: { dim?: boolean }) {
  return (
    <svg width="18" height="26" viewBox="0 0 18 26" className={dim ? "opacity-40" : ""}>
      <rect x="1" y="0" width="9" height="12" fill="#ffffff" stroke="#8a8a8a" />
      <path d="M9 6V0" stroke="#3a78c4" strokeWidth="2" />
      <rect x="5" y="12" width="9" height="14" fill="#ffffff" stroke="#8a8a8a" />
      <path d="M10 10L13 7" stroke="#2f9a55" strokeWidth="1.4" />
    </svg>
  );
}

function ViewIcon({ kind }: { kind: number }) {
  const shapes = [
    "M1 2H15V24H1ZM4 6H12M4 10H12M4 14H12M4 18H12",
    "M1 1H15V17H1ZM4 5H12M4 9H12M4 13H12M1 20H15V26M1 20V26",
    "M1 2H7V24H1ZM9 2H15V24H9ZM3 7H5M3 11H5M3 15H5M11 7H13M11 11H13M11 15H13",
    "M1 1H7V14H1ZM9 1H15V14H9ZM3 4H7M3 8H7M9 4H13M9 8H13M1 17H7V26M9 17H15V26M1 17V26M15 17V26",
  ];
  return (
    <svg width="16" height="22" viewBox="0 0 16 26">
      <path d={shapes[kind]} fill="none" stroke="#9a9a9a" strokeWidth="1.2" />
    </svg>
  );
}

function BottomToolbar() {
  return (
    <div className="flex h-[29px] items-end bg-[#f0f0f0] pl-[984px] font-['Liberation_Sans',Arial,sans-serif]">
      <div className="flex h-[24px] items-center"><NavArrow dir="left" double /></div>
      <div className="ml-[18px] flex h-[24px] items-center"><NavArrow dir="left" /></div>
      <div className="ml-[14px] flex h-[24px] w-[141px] items-center justify-between border border-[#a0a0a0] bg-white px-[4px] text-[16px] text-[#231f20]">
        <span>11 / 36</span>
        <svg width="6" height="5" viewBox="0 0 6 5"><path d="M0 0H6L3 5Z" fill="#333333" /></svg>
      </div>
      <div className="ml-[12px] flex h-[24px] items-center"><NavArrow dir="right" /></div>
      <div className="ml-[17px] flex h-[24px] items-center"><NavArrow dir="right" double /></div>
      <div className="ml-[15px] flex h-[24px] items-end"><PageIcon /></div>
      <div className="ml-[11px] flex h-[24px] items-end"><PageIcon dim /></div>

      <div className="ml-[808px] flex h-[22px] items-end"><ViewIcon kind={0} /></div>
      <div className="ml-[13px] flex h-[22px] items-end"><ViewIcon kind={1} /></div>
      <div className="ml-[10px] flex h-[22px] w-[28px] items-end justify-center bg-[#c4d6ee]"><ViewIcon kind={2} /></div>
      <div className="ml-[8px] flex h-[22px] items-end"><ViewIcon kind={3} /></div>

      <div className="ml-[36px] flex h-[24px] w-[38px] items-center text-[15px] text-[#231f20]">100%</div>
      <svg className="mb-[9px] ml-[29px]" width="6" height="5" viewBox="0 0 6 5"><path d="M0 0H6L3 5Z" fill="#333333" /></svg>
      <div className="mb-[2px] ml-[7px] flex h-[20px] items-center">
        <svg width="18" height="18" viewBox="0 0 18 18">
          <circle cx="9" cy="9" r="8" fill="none" stroke="#444444" />
          <path d="M5 9H13" stroke="#444444" />
        </svg>
        <div className="relative ml-[9px] h-[2px] w-[116px] bg-[#3a3a3a]">
          <div className="absolute left-[55px] top-[-6px] h-[14px] w-[5px] bg-[#2a2a2a]" />
        </div>
        <svg className="ml-[5px]" width="18" height="18" viewBox="0 0 18 18">
          <circle cx="9" cy="9" r="8" fill="none" stroke="#444444" />
          <path d="M5 9H13M9 5V13" stroke="#444444" />
        </svg>
      </div>
    </div>
  );
}

// ─── Page ─────────────────────────────────────────────────────────────────────

export default function App() {
  const center = "text-center";
  const left18 = "pl-[18px]";
  const left24 = "pl-[16px]";
  return (
    <div className="flex h-[1317px] w-[2514px] flex-col overflow-hidden bg-white font-['Liberation_Sans',Arial,sans-serif]">
      <div className="flex h-[1271px]">
        <div className="w-[7px] bg-[#adadad]" />

        <div className="relative flex-1 overflow-hidden">
          <Schematic />

          <TinyTable
            place="left-[1632px] top-[153px]"
            cols="grid-cols-[92px_156px_34px_38px]"
            head={["SWITCHED POWER FUSE", "FUNCTION", "RATING", "CID-CLR"]}
            rows={SWITCHED}
            aligns={[center, left18, center, center]}
            headAligns={[center, center, center, center]}
          />
          <TinyTable
            place="left-[1954px] top-[153px]"
            cols="grid-cols-[102px_139px_33px_37px]"
            head={["UNSWITCHED POWER FUSE", "FUNCTION", "RATING", "CID-CLR"]}
            rows={UNSWITCHED}
            aligns={[center, left18, center, center]}
            headAligns={[center, "pl-[6px]", center, center]}
          />
          <TinyTable
            place="left-[2278px] top-[261px]"
            cols="grid-cols-[57px_42px]"
            head={["FUSE RATING", "PART NO."]}
            rows={FUSE_RATINGS}
            aligns={[center, center]}
          />
          <TinyTable
            place="left-[1632px] top-[379px]"
            cols="grid-cols-[39px_42px_37px_146px]"
            head={["REF DES", "PART NO.", "CHG LVL", "DESCRIPTION"]}
            rows={HARNESSES}
            aligns={[center, center, center, left24]}
            headAligns={[center, center, center, "pl-[3px]"]}
          />
          <TinyTable
            place="left-[1632px] top-[587px]"
            cols="grid-cols-[38px_43px_37px_124px]"
            head={["REF DES", "PART NO.", "CHG LVL", "DESCRIPTION"]}
            rows={CABLES}
            aligns={[center, center, center, left24]}
            headAligns={[center, center, center, "pl-[5px]"]}
          />

          <PatchTable />
          <WireLegend />
          <WarningBox />
          <TitleBlock />
          <CalloutFormat />
          <SymbolTable />
          <AbbrevTable />
        </div>

        {/* vertical scrollbar */}
        <div className="relative w-[21px] bg-[#f0f0f0]">
          <svg className="absolute left-[5px] top-[10px]" width="10" height="7" viewBox="0 0 10 7">
            <path d="M1 6L5 1L9 6" fill="none" stroke="#555555" />
          </svg>
          <div className="absolute left-[1px] top-[466px] h-[55px] w-[20px] bg-[#c8c8c8]" />
        </div>
      </div>

      {/* horizontal scrollbar */}
      <div className="flex h-[17px] items-center bg-[#f0f0f0] pl-[7px]">
        <div className="h-full w-[11px] border-l border-r border-[#9a9a9a]" />
        <svg className="ml-[5px]" width="7" height="10" viewBox="0 0 7 10">
          <path d="M6 1L1 5L6 9" fill="none" stroke="#555555" />
        </svg>
        <div className="ml-[729px] h-full w-[449px] bg-[#c8c8c8]" />
        <svg className="ml-[1270px]" width="7" height="10" viewBox="0 0 7 10">
          <path d="M1 1L6 5L1 9" fill="none" stroke="#555555" />
        </svg>
        <svg className="ml-[14px]" width="10" height="7" viewBox="0 0 10 7">
          <path d="M1 1L5 6L9 1" fill="none" stroke="#555555" />
        </svg>
      </div>

      <BottomToolbar />
    </div>
  );
}
